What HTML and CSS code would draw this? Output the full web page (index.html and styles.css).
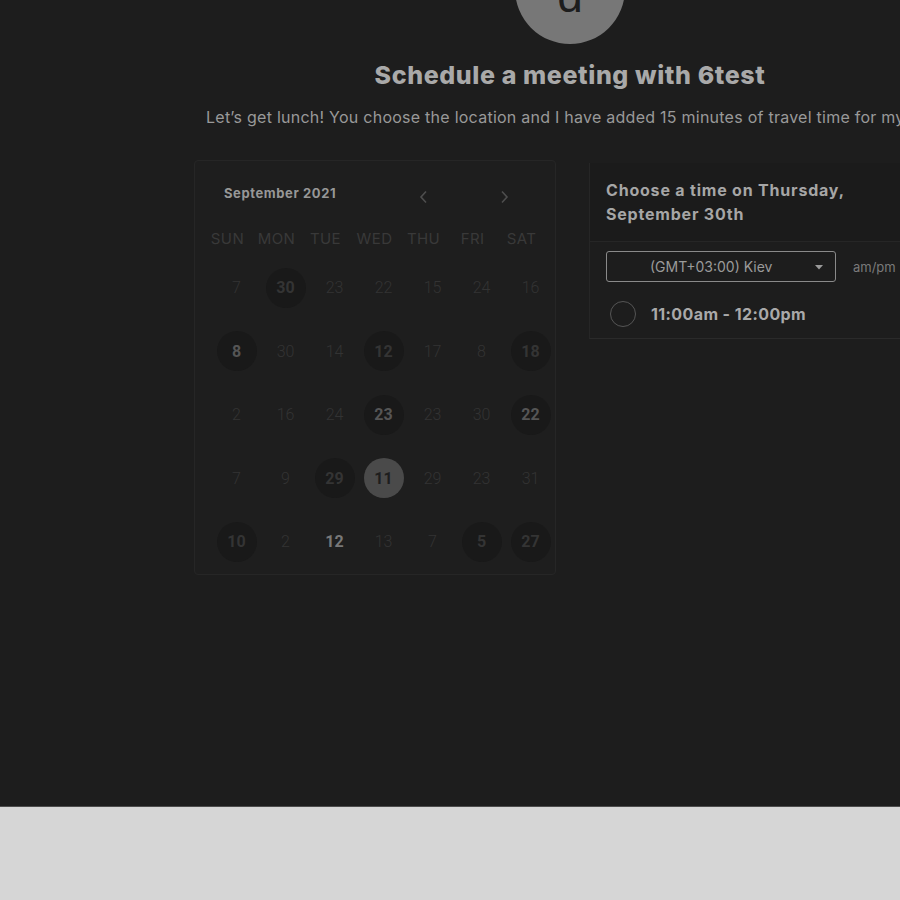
FILE: index.html
```html
<!DOCTYPE html>
<html>
<head>
<meta charset="utf-8">
<link rel="stylesheet" href="styles.css">
</head>
<body>
<div class="overlay">
  <div class="page">
    <div class="avatar"><span>d</span></div>
    <h1 class="title">Schedule a meeting with 6test</h1>
    <p class="desc">Let’s get lunch! You choose the location and I have added 15 minutes of travel time for my commute.</p>
    <div class="main">
      <div class="calendar">
        <div class="cal-head">
          <span class="month">September 2021</span>
          <span class="arrow prev"><svg width="10" height="14" viewBox="0 0 10 14"><path d="M7 1.5 L2 7 L7 12.5" fill="none" stroke="currentColor" stroke-width="1.6"/></svg></span>
          <span class="arrow next"><svg width="10" height="14" viewBox="0 0 10 14"><path d="M3 1.5 L8 7 L3 12.5" fill="none" stroke="currentColor" stroke-width="1.6"/></svg></span>
        </div>
        <div class="dow">
          <span>SUN</span><span>MON</span><span>TUE</span><span>WED</span><span>THU</span><span>FRI</span><span>SAT</span>
        </div>
        <div class="days">
          <span class="d">7</span><span class="d av">30</span><span class="d">23</span><span class="d">22</span><span class="d">15</span><span class="d">24</span><span class="d">16</span>
          <span class="d av hi">8</span><span class="d">30</span><span class="d">14</span><span class="d av">12</span><span class="d">17</span><span class="d">8</span><span class="d av">18</span>
          <span class="d">2</span><span class="d">16</span><span class="d">24</span><span class="d av hi">23</span><span class="d">23</span><span class="d">30</span><span class="d av hi">22</span>
          <span class="d">7</span><span class="d">9</span><span class="d av">29</span><span class="d sel">11</span><span class="d">29</span><span class="d">23</span><span class="d">31</span>
          <span class="d av">10</span><span class="d">2</span><span class="d bright">12</span><span class="d">13</span><span class="d">7</span><span class="d av">5</span><span class="d av">27</span>
        </div>
      </div>
      <div class="times">
        <div class="times-head">Choose a time on Thursday,<br>September 30th</div>
        <div class="tz-row">
          <div class="select"><span>(GMT+03:00) Kiev</span><svg class="caret" width="8" height="5" viewBox="0 0 8 5"><path d="M0 0 L8 0 L4 4.5 Z" fill="currentColor"/></svg></div>
          <span class="ampm">am/pm</span>
        </div>
        <div class="slot">
          <span class="radio"></span>
          <span class="slot-text">11:00am - 12:00pm</span>
        </div>
      </div>
    </div>
  </div>
</div>
</body>
</html>
```
FILE: styles.css
```css
* { box-sizing: border-box; }
html, body { margin: 0; padding: 0; }
body {
  background: #d6d6d6;
  font-family: Inter, "Liberation Sans", sans-serif;
  width: 900px;
  height: 900px;
  overflow: hidden;
}
.overlay {
  height: 807px;
  background: #1d1d1d;
  border-bottom: 1px solid #4d4d4d;
  overflow: hidden;
}
.page {
  width: 1140px;
  text-align: center;
}
.avatar {
  width: 110px;
  height: 110px;
  border-radius: 50%;
  background: #777777;
  margin: -66px auto 0;
  position: relative;
  overflow: hidden;
}
.avatar span {
  position: absolute;
  left: 0; right: 0;
  bottom: 25px;
  font-family: "Liberation Sans", sans-serif;
  font-size: 46px;
  font-weight: 400;
  color: #1d1d1d;
  line-height: 46px;
}
.title {
  margin: 16px 0 0;
  font-size: 25px;
  font-weight: 800;
  line-height: 30px;
  letter-spacing: 0.6px;
  color: #a9a9a9;
}
.desc {
  margin: 17px 0 0;
  font-size: 16px;
  line-height: 20px;
  letter-spacing: 0.25px;
  color: #999;
  white-space: nowrap;
  text-align: left;
  padding-left: 206px;
}
.main {
  display: flex;
  justify-content: center;
  gap: 33px;
  margin-top: 33px;
  text-align: left;
}
.calendar {
  width: 362px;
  height: 415px;
  border: 1px solid #262626;
  border-radius: 4px;
  background: #1e1e1e;
}
.cal-head {
  display: flex;
  align-items: center;
  height: 62px;
  padding: 2px 0 0 29px;
}
.month {
  font-size: 13px;
  font-weight: 700;
  letter-spacing: 0.6px;
  color: #979797;
  width: 194px;
}
.arrow {
  color: #4e4e4e;
  display: flex;
  margin-top: 8px;
}
.prev { margin-left: 1px; }
.next { margin-left: 70px; }
.dow {
  display: grid;
  grid-template-columns: repeat(7, 49px);
  padding-left: 8px;
  height: 30px;
  align-items: center;
}
.dow span {
  text-align: center;
  font-size: 15px;
  color: #393939;
  letter-spacing: 0.4px;
}
.days {
  display: grid;
  grid-template-columns: repeat(7, 49px);
  grid-auto-rows: 63.5px;
  padding-left: 17px;
  margin-top: 3px;
}
.d {
  display: flex;
  align-items: center;
  justify-content: center;
  font-family: Roboto, sans-serif;
  font-weight: 300;
  font-size: 16px;
  color: #333333;
  position: relative;
  isolation: isolate;
}
.d.av, .d.sel {
  font-weight: 700;
}
.d.av::before, .d.sel::before {
  content: "";
  position: absolute;
  width: 40px;
  height: 40px;
  border-radius: 50%;
  left: 50%;
  top: 50%;
  transform: translate(-50%, -50%);
  background: #191919;
  z-index: -1;
}
.d.av { color: #343434; }
.d.hi { color: #555555; }
.d.sel { color: #1e1e1e; }
.d.sel::before { background: #4a4a4a; }
.d.bright { color: #787878; font-weight: 700; }
.times {
  width: 357px;
  margin-top: 3px;
  height: 176px;
  border-left: 1px solid #262626;
  border-bottom: 1px solid #2a2a2a;
}
.times-head {
  background: #1b1b1b;
  padding: 15px 16px 0;
  height: 79px;
  font-size: 16px;
  font-weight: 700;
  letter-spacing: 0.8px;
  line-height: 24px;
  color: #a6a6a6;
  border-bottom: 1px solid #262626;
}
.tz-row {
  display: flex;
  align-items: center;
  padding: 9px 0 0 16px;
}
.select {
  width: 230px;
  height: 31px;
  border: 1px solid #8a8a8a;
  border-radius: 3px;
  display: flex;
  align-items: center;
  padding-left: 43px;
  position: relative;
  font-size: 14px;
  color: #9a9a9a;
}
.caret {
  position: absolute;
  right: 12px;
  top: 13px;
  color: #9a9a9a;
}
.ampm {
  margin-left: 17px;
  font-size: 13px;
  color: #7a7a7a;
}
.slot {
  display: flex;
  align-items: center;
  padding: 19px 0 0 20px;
}
.radio {
  width: 26px;
  height: 26px;
  border-radius: 50%;
  border: 1.5px solid #555;
}
.slot-text {
  margin-left: 15px;
  font-size: 16px;
  font-weight: 700;
  letter-spacing: 0.4px;
  color: #a9a9a9;
}
```
